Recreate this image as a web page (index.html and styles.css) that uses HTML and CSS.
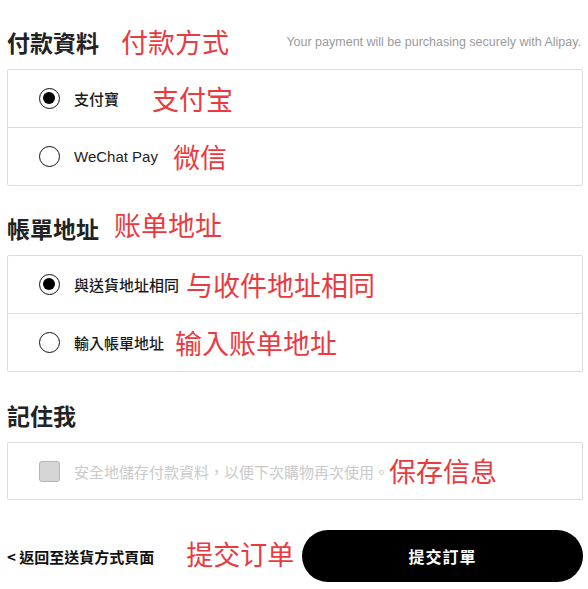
FILE: index.html
```html
<!DOCTYPE html>
<html lang="zh-Hant">
<head>
    <meta charset="UTF-8">
    <title>付款資料</title>
    <link rel="stylesheet" href="styles.css">
</head>
<body>
<div class="page">

    <!--付款資料-->
    <div class="sec">
        <div class="sec_head">
            <h2>付款資料</h2>
            <span class="note note_h1">付款方式</span>
            <span class="tip">Your payment will be purchasing securely with Alipay.</span>
        </div>
        <div class="box">
            <div class="row">
                <span class="radio checked"></span>
                <span class="label">支付寶</span>
                <span class="note note_alipay">支付宝</span>
            </div>
            <div class="row">
                <span class="radio"></span>
                <span class="label en">WeChat Pay</span>
                <span class="note note_wechat">微信</span>
            </div>
        </div>
    </div>

    <!--帳單地址-->
    <div class="sec">
        <div class="sec_head">
            <h2>帳單地址</h2>
            <span class="note note_h2">账单地址</span>
        </div>
        <div class="box">
            <div class="row">
                <span class="radio checked"></span>
                <span class="label">與送貨地址相同</span>
                <span class="note note_same">与收件地址相同</span>
            </div>
            <div class="row">
                <span class="radio"></span>
                <span class="label">輸入帳單地址</span>
                <span class="note note_input">输入账单地址</span>
            </div>
        </div>
    </div>

    <!--記住我-->
    <div class="sec sec_last">
        <div class="sec_head">
            <h2>記住我</h2>
        </div>
        <div class="box">
            <div class="row row_check">
                <span class="check"></span>
                <span class="label label_off">安全地儲存付款資料，以便下次購物再次使用。</span>
                <span class="note">保存信息</span>
            </div>
        </div>
    </div>

    <div class="foot">
        <a href="#" class="back">&lt; 返回至送貨方式頁面</a>
        <span class="note note_submit">提交订单</span>
        <button class="btn_sub">提交訂單</button>
    </div>

</div>
</body>
</html>
```

FILE: styles.css
```css
* {
    margin: 0;
    padding: 0;
    box-sizing: border-box;
}

body {
    background-color: white;
    font-family: "Liberation Sans", "Noto Sans CJK TC", sans-serif;
    color: #222;
}

.page {
    width: 583px;
    padding: 20px 0 0 7px;
}

.sec + .sec {
    margin-top: 20px;
}

.sec_last {
    padding-top: 1px;
}

.sec_head {
    display: flex;
    align-items: center;
    height: 44px;
    margin-bottom: 5px;
}

.sec_head h2 {
    font-family: "Noto Sans CJK TC", sans-serif;
    font-size: 23px;
    font-weight: bold;
    line-height: 30px;
    color: #222;
}

/*红色标注*/
.note {
    font-family: "Noto Sans CJK SC", sans-serif;
    font-size: 27px;
    line-height: 32px;
    color: #eb3a3f;
    white-space: nowrap;
}

.note_h1 {
    margin-left: 22px;
}

.note_h2 {
    margin-left: 15px;
    margin-top: -6px;
}

.note_alipay {
    margin-left: 33px;
}

.note_wechat {
    margin-left: 15px;
}

.note_same {
    margin-left: 7px;
}

.note_input {
    margin-left: 11px;
}

.tip {
    margin-left: auto;
    margin-right: 2px;
    font-size: 12.5px;
    color: #9a9a9a;
}

.box {
    border: 1px solid #dcdcdc;
    border-radius: 2px;
}

.row {
    display: flex;
    align-items: center;
    height: 57px;
    padding-left: 31px;
}

.row + .row {
    height: 58px;
    border-top: 1px solid #dcdcdc;
}

.row_check {
    height: 56px;
}

.radio {
    width: 21px;
    height: 21px;
    border: 1.5px solid #111;
    border-radius: 50%;
    position: relative;
    flex: none;
}

.radio.checked::after {
    content: "";
    position: absolute;
    left: 3px;
    top: 3px;
    width: 12px;
    height: 12px;
    border-radius: 50%;
    background-color: #000;
}

.check {
    width: 21px;
    height: 21px;
    background-color: #d6d6d6;
    border: 1px solid #b4b4b4;
    border-radius: 3px;
    flex: none;
}

.label {
    margin-left: 14px;
    font-family: "Noto Sans CJK TC", sans-serif;
    font-size: 15px;
    font-weight: 500;
    color: #1a1a1a;
    white-space: nowrap;
}

.label.en {
    font-family: "Liberation Sans", sans-serif;
    font-weight: normal;
    color: #222;
}

.label_off {
    font-weight: normal;
    color: #c9c9c9;
}

.foot {
    display: flex;
    align-items: center;
    margin-top: 30px;
    height: 52px;
}

.back {
    font-family: "Noto Sans CJK TC", sans-serif;
    font-size: 15px;
    font-weight: bold;
    color: #111;
    text-decoration: none;
    white-space: nowrap;
}

.note_submit {
    margin-left: 32px;
    margin-top: -4px;
}

.btn_sub {
    margin-left: auto;
    width: 281px;
    height: 52px;
    border: none;
    border-radius: 26px;
    background-color: #000;
    color: white;
    font-family: "Noto Sans CJK TC", sans-serif;
    font-size: 16px;
    font-weight: bold;
    letter-spacing: 1px;
}
```
